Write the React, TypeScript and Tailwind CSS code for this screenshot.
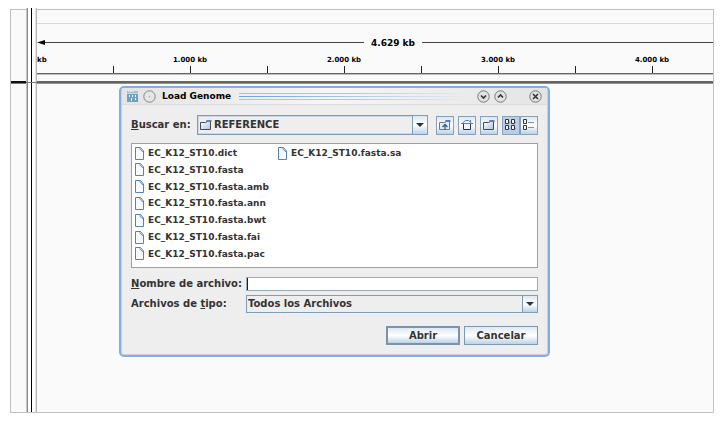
import type { ReactNode } from "react";

const files = [
  "EC_K12_ST10.dict",
  "EC_K12_ST10.fasta",
  "EC_K12_ST10.fasta.amb",
  "EC_K12_ST10.fasta.ann",
  "EC_K12_ST10.fasta.bwt",
  "EC_K12_ST10.fasta.fai",
  "EC_K12_ST10.fasta.pac",
  "EC_K12_ST10.fasta.sa",
];

const positions = ["1.000 kb", "2.000 kb", "3.000 kb", "4.000 kb"];
const ticks = [500, 1000, 1500, 2000, 2500, 3000, 3500, 4000];

function Ruler() {
  return (
    <div className="text-black">
      <div className="h-3.5 border-b border-[#d8d8d8]" />
      <div className="mt-1 flex h-7 items-center">
        <svg className="h-[7px] w-2 shrink-0" viewBox="0 0 8 7">
          <path d="M0 3.5 8 1v5z" fill="#000" />
        </svg>
        <div className="h-px w-[319px] shrink-0 bg-[#444]" />
        <span className="shrink-0 px-[7px] pt-0.5 text-[9px] leading-3">4.629 kb</span>
        <div className="h-px flex-1 bg-[#444]" />
      </div>
      <div className="flex h-2 text-[7px] leading-2">
        <span className="w-[76px] shrink-0">kb</span>
        {positions.map((p) => (
          <span key={p} className="w-[154px] shrink-0 text-center">{p}</span>
        ))}
      </div>
      <div className="mt-0.5 flex h-[7px]">
        {ticks.map((t) => (
          <div key={t} className="w-[77px] shrink-0 border-r border-[#222]" />
        ))}
      </div>
      <div className="h-px bg-[#666]" />
      <div className="h-px bg-[#bdbdbd]" />
      <div className="h-1.5 bg-[#fafafa]" />
      <div className="h-0.5 bg-[#646464]" />
      <div className="h-px bg-[#909090]" />
    </div>
  );
}

function FolderIcon() {
  return (
    <svg className="h-3 w-3.5 shrink-0" viewBox="0 0 14 12">
      <defs>
        <linearGradient id="folder" x1="0" y1="0" x2="1" y2="1">
          <stop offset="0" stopColor="#fff" />
          <stop offset="1" stopColor="#a9c4ea" />
        </linearGradient>
      </defs>
      <path d="M1.500 10.500v-7h5l2-1h3v8z" fill="url(#folder)" stroke="#4a4a4a" />
      <path d="M7.500 1h5v2H7z" fill="#5b7fc8" />
    </svg>
  );
}

function FileIcon() {
  return (
    <svg className="h-[13px] w-[11px] shrink-0" viewBox="0 0 11 13">
      <path d="M1.500 .5h5l3 3.500v8.500h-8z" fill="#f7fbff" stroke="#5582b4" />
      <path d="M6 .5v2l1.500.5.5 1.500h2" fill="none" stroke="#5582b4" strokeWidth=".8" />
    </svg>
  );
}

function WindowButton({ label, path, muted }: { label: string; path?: string; muted?: boolean }) {
  return (
    <button aria-label={label} className="block size-[13px] shrink-0">
      <svg className="size-[13px]" viewBox="0 0 13 13">
        <circle cx="6.5" cy="6.5" r="5.700" fill={muted ? "#e6e6e6" : "#e2e2e2"} stroke={muted ? "#858585" : "#777"} />
        {path ? (
          <path d={path} fill="none" stroke="#333" strokeWidth="1.6" />
        ) : (
          <circle cx="6.5" cy="6.5" r=".7" fill="#aaa" />
        )}
      </svg>
    </button>
  );
}

function ToolButton({ label, children, pressed }: { label: string; children: ReactNode; pressed?: boolean }) {
  return (
    <button
      aria-label={label}
      aria-pressed={pressed}
      className={
        pressed
          ? "flex h-[19px] w-[18px] items-center justify-center border border-[#8aa0b5] bg-[#b8cfe5]"
          : "flex h-[19px] w-[18px] items-center justify-center border border-[#8aa0b5] bg-linear-to-b from-[#dce8f3] via-white to-[#bcd2e6]"
      }
    >
      {children}
    </button>
  );
}

function Combo({ id, value, icon, tall }: { id: string; value: string; icon?: boolean; tall?: boolean }) {
  return (
    <div
      className={
        tall
          ? "relative flex h-5 flex-1 border border-[#7f9bb6] shadow-[inset_0_0_0_1px_#c9d8e6]"
          : "relative flex h-[18px] flex-1 border border-[#7f9bb6]"
      }
    >
      <select
        id={id}
        className={
          icon
            ? "w-full appearance-none bg-transparent pr-4 pl-4 outline-none"
            : "w-full appearance-none bg-transparent pr-4 pl-px outline-none"
        }
      >
        <option>{value}</option>
      </select>
      {icon && (
        <span className="pointer-events-none absolute inset-y-0 left-px flex items-center">
          <FolderIcon />
        </span>
      )}
      <span className="pointer-events-none absolute inset-y-0 right-0 flex w-[15px] items-center justify-center border-l border-[#7f9bb6] bg-linear-to-b from-[#dce8f3] via-white to-[#bcd2e6]">
        <svg className="h-1 w-2" viewBox="0 0 8 4">
          <path d="M0 0h8L4 4z" fill="#333" />
        </svg>
      </span>
    </div>
  );
}

function TitleBar() {
  return (
    <div className="flex h-[17px] items-center border-b border-[#dadada] bg-linear-to-r from-[#e4e4e4] via-[#f6f6f6] to-[#e4e4e4] pr-[5px] pl-[5px] text-black">
      <svg className="size-[11px] shrink-0" viewBox="0 0 11 11">
        <rect width="11" height="11" fill="#9dbfce" />
        <rect y="3" width="11" height="8" fill="#6ea3bb" />
        <path d="M0 2.500h11M1 .5h6" stroke="#c9dce4" />
        <path d="M2.500 4v2M5.500 4v2M8.500 4v2M4.500 7v3M8.500 7v2" stroke="#e9f2f5" />
      </svg>
      <div className="ml-[5px] flex">
        <WindowButton label="Menu" muted />
      </div>
      <h1 className="ml-1.5 text-[9px]">Load Genome</h1>
      <div className="mx-2 flex flex-1 flex-col gap-0.5">
        <div className="h-px bg-linear-to-r from-[#9fc4ec] via-[#a9c8ea] to-transparent" />
        <div className="h-px bg-linear-to-r from-[#6ba3e0] via-[#a9c8ea] to-transparent" />
        <div className="h-px bg-linear-to-r from-[#9fc4ec] via-[#a9c8ea] to-transparent" />
      </div>
      <div className="flex gap-1">
        <WindowButton label="Minimizar" path="M4 5.500 6.500 8 9 5.500" />
        <WindowButton label="Maximizar" path="M4 7.500 6.500 5 9 7.500" />
      </div>
      <div className="ml-[22px] flex">
        <WindowButton label="Cerrar" path="M4 4 9 9M9 4 4 9" />
      </div>
    </div>
  );
}

function LoadDialog() {
  return (
    <section
      aria-label="Load Genome"
      className="absolute top-[76px] left-[108px] w-[431px] rounded-[5px] border-2 border-[#86aedb] bg-[#eee] text-[#333] shadow-[inset_0_0_0_1px_#cfcfcf]"
    >
      <div className="p-px pt-0">
        <TitleBar />
        <div className="px-[9px] pt-[10px] pb-[9px]">
          <div className="flex items-center">
            <label htmlFor="folder-select" className="w-[66px]">
              <span className="underline">B</span>uscar en:
            </label>
            <Combo id="folder-select" value="REFERENCE" icon tall />
            <div className="ml-2 flex gap-1">
              <ToolButton label="Subir un nivel">
                <svg className="h-3 w-3.5 shrink-0" viewBox="0 0 14 12">
                  <path d="M1.500 10.500v-7h5l2-1h3v8z" fill="#e4edf8" stroke="#66788c" />
                  <path d="M7.500 1h5v2H7z" fill="#5b7fc8" />
                  <path d="M7 11V6M4.500 8 7 5.500 9.500 8" fill="none" stroke="#2f6098" strokeWidth="1.300" />
                </svg>
              </ToolButton>
              <ToolButton label="Inicio">
                <svg className="size-3 shrink-0" viewBox="0 0 12 12">
                  <path d="M2.500 5v5.500h7V5" fill="#edf4fb" stroke="#223344" />
                  <path d="M0 4.500h12M1.500 4 4.500 1.500h3l3 2.500M9.500 3V1" fill="none" stroke="#4a82b8" />
                </svg>
              </ToolButton>
              <ToolButton label="Crear carpeta">
                <FolderIcon />
              </ToolButton>
              <div className="flex">
                <ToolButton label="Lista" pressed>
                  <svg className="size-3 shrink-0" viewBox="0 0 12 12">
                    <path d="M.5 .5h3v4h-3zM6.500 .5h3v4h-3zM.5 6.500h3v4h-3zM6.500 6.500h3v4h-3z" fill="#eef5fb" stroke="#333" />
                    <path d="M4 3.500h1M10 3.500h1M4 9.500h1M10 9.500h1" stroke="#8899aa" />
                  </svg>
                </ToolButton>
                <ToolButton label="Detalles">
                  <svg className="size-3 shrink-0" viewBox="0 0 12 12">
                    <path d="M.5 .5h3v4h-3zM.5 6.500h3v4h-3z" fill="#eef5fb" stroke="#333" />
                    <path d="M5 3.500h6M5 8.500h6" stroke="#8c8c94" />
                  </svg>
                </ToolButton>
              </div>
            </div>
          </div>

          <div className="mt-2 h-[125px] border border-[#8fa3b5] bg-white px-0.5 pt-px">
            <ul className="grid h-[117px] grid-flow-col grid-cols-[143px_1fr] grid-rows-[repeat(7,16px)] content-between text-[9px]">
              {files.map((f) => (
                <li key={f} className="flex items-center gap-[3px]">
                  <FileIcon />
                  {f}
                </li>
              ))}
            </ul>
          </div>

          <div className="mt-[9px] flex items-center">
            <label htmlFor="file-name" className="w-[115px]">
              <span className="underline">N</span>ombre de archivo:
            </label>
            <div className="relative flex h-3.5 flex-1">
              <input id="file-name" type="text" className="w-full border border-[#9aa9b7] bg-white px-0.5 outline-none" />
              <span className="pointer-events-none absolute inset-y-px left-px w-px bg-[#222]" />
            </div>
          </div>
          <div className="mt-1 flex items-center">
            <label htmlFor="file-type" className="w-[115px]">
              Archivos de <span className="underline">t</span>ipo:
            </label>
            <Combo id="file-type" value="Todos los Archivos" />
          </div>
          <div className="mt-[13px] flex justify-end gap-1">
            <button className="h-[19px] w-[74px] border-2 border-[#7c93a9] bg-linear-to-b from-[#dce8f3] via-white to-[#bcd2e6] leading-[15px]">
              Abrir
            </button>
            <button className="h-[19px] w-[74px] border border-[#7f97ad] bg-linear-to-b from-[#dce8f3] via-white to-[#bcd2e6] leading-[17px]">
              Cancelar
            </button>
          </div>
        </div>
      </div>
    </section>
  );
}

function Strip({ className }: { className: string }) {
  return (
    <div className={className}>
      <div className="w-px bg-[#c4c4c4]" />
      <div className="w-px bg-[#8a8a8a]" />
      <div className="w-[3px] bg-white" />
      <div className="w-px bg-black" />
      <div className="w-[3px] bg-white" />
      <div className="w-px bg-[#e2e2e2]" />
      <div className="w-px bg-[#b6b6bc]" />
    </div>
  );
}

export default function App() {
  return (
    <main className="flex h-screen bg-white pt-[9px] pr-[11px] pb-2.5 pl-2.5 font-['DejaVu_Sans',Verdana,sans-serif] text-[10px] leading-3 font-bold">
      <div className="relative flex min-w-0 flex-1 border border-[#c0c0c0] bg-[#fafafa]">
        <div className="w-[15px] shrink-0 pt-[71px]">
          <div className="h-0.5 bg-[#111]" />
          <div className="h-px bg-[#777]" />
        </div>
        <div className="-mt-0.5 flex w-[11px] shrink-0 flex-col">
          <Strip className="flex h-[74px]" />
          <div className="h-px bg-[#777]" />
          <Strip className="flex flex-1" />
        </div>
        <div className="min-w-0 flex-1 overflow-hidden">
          <Ruler />
        </div>
        <LoadDialog />
      </div>
    </main>
  );
}
